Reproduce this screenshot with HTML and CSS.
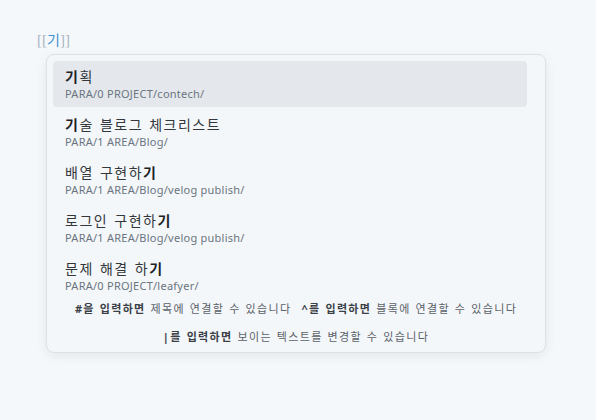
FILE: index.html
```html
<!DOCTYPE html>
<html lang="ko">
<head>
<meta charset="utf-8">
<link rel="stylesheet" href="styles.css">
</head>
<body>
<div class="page">
  <div class="editor"><span class="br">[[</span><span class="q">기</span><span class="br">]]</span></div>
  <div class="popup">
    <div class="list">
      <div class="item sel"><div class="title"><b>기</b>획</div><div class="path">PARA/0 PROJECT/contech/</div></div>
      <div class="item"><div class="title"><b>기</b>술 블로그 체크리스트</div><div class="path">PARA/1 AREA/Blog/</div></div>
      <div class="item"><div class="title">배열 구현하<b>기</b></div><div class="path">PARA/1 AREA/Blog/velog publish/</div></div>
      <div class="item"><div class="title">로그인 구현하<b>기</b></div><div class="path">PARA/1 AREA/Blog/velog publish/</div></div>
      <div class="item"><div class="title">문제 해결 하<b>기</b></div><div class="path">PARA/0 PROJECT/leafyer/</div></div>
    </div>
    <div class="hints">
      <div class="row"><span><b>#을 입력하면</b> 제목에 연결할 수 있습니다</span><span><b>^를 입력하면</b> 블록에 연결할 수 있습니다</span></div>
      <div class="row"><span><b>|를 입력하면</b> 보이는 텍스트를 변경할 수 있습니다</span></div>
    </div>
  </div>
</div>
</body>
</html>
```
FILE: styles.css
```css
html, body { margin: 0; padding: 0; }
body {
  background: #f5f8fb;
  font-family: "Noto Sans", "Noto Sans CJK KR", sans-serif;
  width: 596px;
  height: 420px;
  overflow: hidden;
}
.page { padding: 30px 0 0 37px; }
.editor { font-size: 14px; line-height: 20px; height: 24px; }
.br { color: #a9b4bf; font-family: "Liberation Serif", "Noto Sans CJK KR", serif; font-size: 15px; }
.q { color: #3b8fd0; }
.popup {
  margin-left: 9px;
  width: 500px;
  box-sizing: border-box;
  background: #f4f7fa;
  border: 1px solid #dde1e5;
  border-radius: 8px;
  box-shadow: 0 3px 12px rgba(0,0,0,0.07);
  padding: 6px 6px 7px 6px;
}
.list { display: flex; flex-direction: column; gap: 2px; width: 474px; }
.item { padding: 5px 12px 6px 12px; border-radius: 4px; }
.item.sel { background: #e4e8ec; }
.title { font-size: 14px; line-height: 21px; color: #33373b; letter-spacing: 1.5px; word-spacing: 1px; }
.title b { font-weight: 700; color: #1e2226; }
.path { font-size: 11px; line-height: 14px; color: #6a7580; letter-spacing: 0.25px; }
.hints { font-size: 11px; color: #5a6168; margin-top: 2px; letter-spacing: 1.35px; word-spacing: 0.7px; }
.hints b { font-weight: 700; color: #3a4046; }
.row { display: flex; justify-content: center; gap: 10px; line-height: 16px; }
.row + .row { margin-top: 12px; }
```
